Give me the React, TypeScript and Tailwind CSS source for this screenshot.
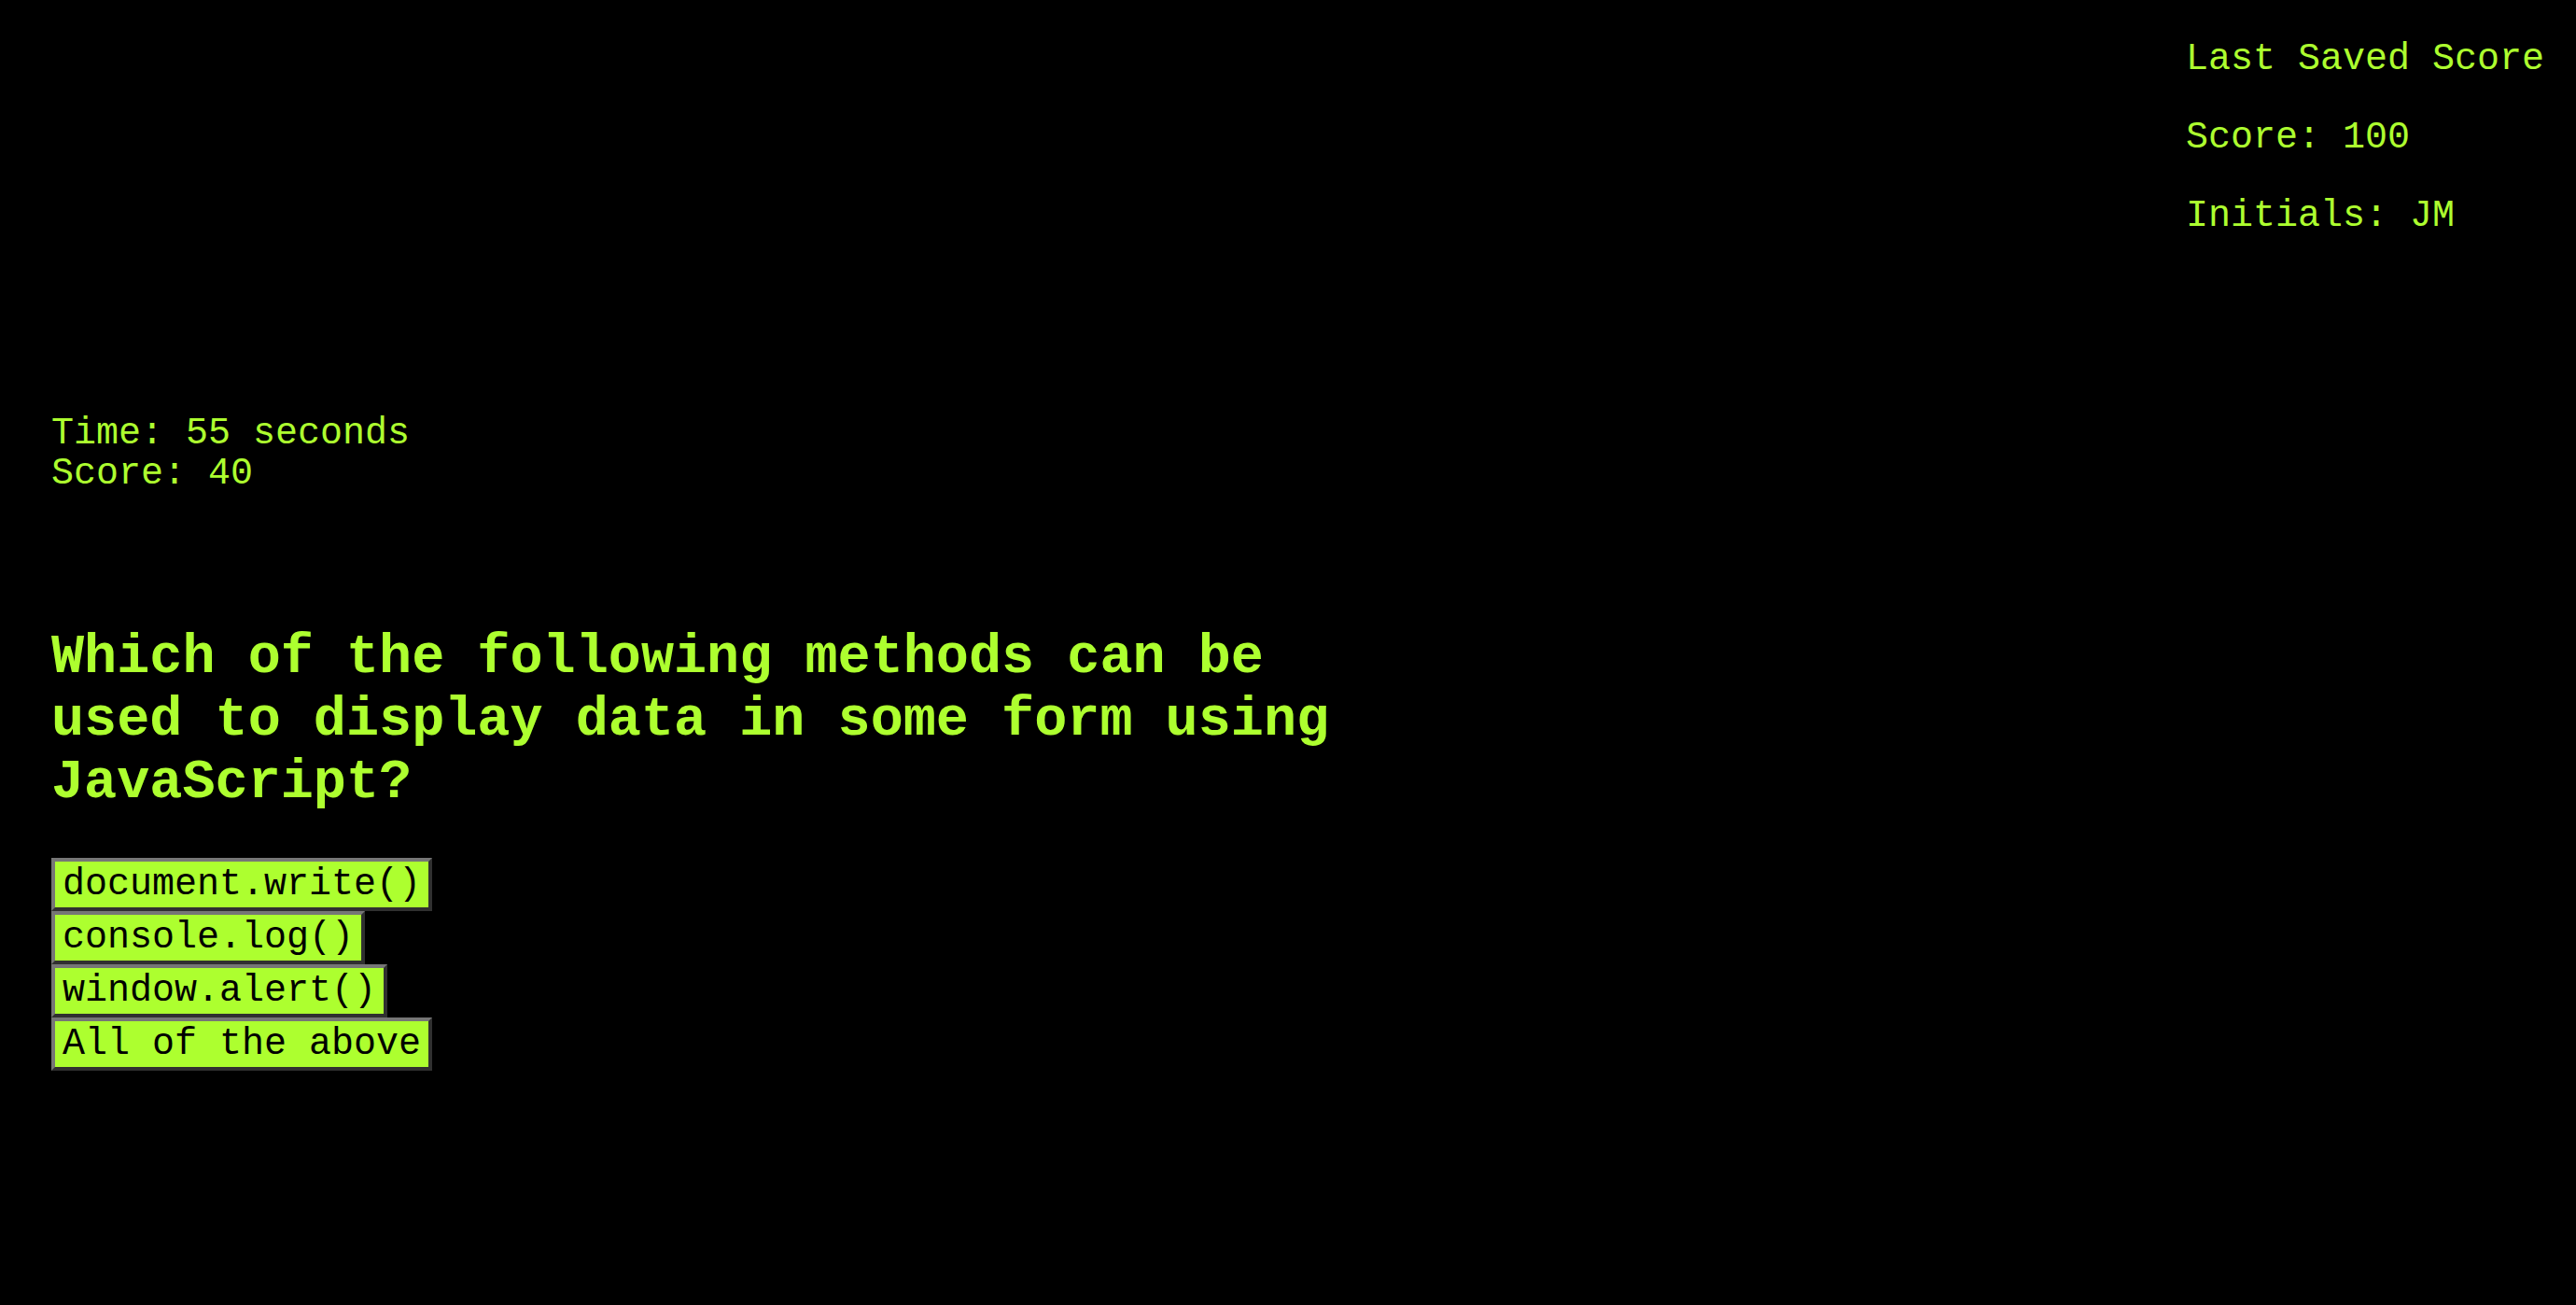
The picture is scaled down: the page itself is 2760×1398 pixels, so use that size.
const answers = ['document.write()', 'console.log()', 'window.alert()', 'All of the above'];

function LastScore() {
  return (
    <aside className="flex justify-end pr-[34px] pt-[41px]">
      <div className="flex flex-col gap-[39px] text-[40px] leading-[45px]">
        <p>Last Saved Score</p>
        <p>Score: 100</p>
        <p>Initials: JM</p>
      </div>
    </aside>
  );
}

export default function App() {
  return (
    <div className="min-h-screen bg-black font-['Liberation_Mono',monospace] text-[#adff2f]">
      <LastScore />

      <main className="mt-[189px] pl-[55px]">
        <div className="text-[40px] leading-[43px]">
          <p>Time: 55 seconds</p>
          <p>Score: 40</p>
        </div>

        <h2 className="mt-[142px] max-w-[1420px] text-[58.5px] font-bold leading-[67px]">
          Which of the following methods can be used to display data in some form using JavaScript?
        </h2>

        <div className="mt-[47px] flex flex-col items-start">
          {answers.map((answer) => (
            <button
              key={answer}
              className="border-4 border-b-[#303030] border-l-[#767676] border-r-[#303030] border-t-[#767676] bg-[#adff2f] px-2 py-0.5 text-[40px] leading-[45px] text-black"
            >
              {answer}
            </button>
          ))}
        </div>
      </main>
    </div>
  );
}
